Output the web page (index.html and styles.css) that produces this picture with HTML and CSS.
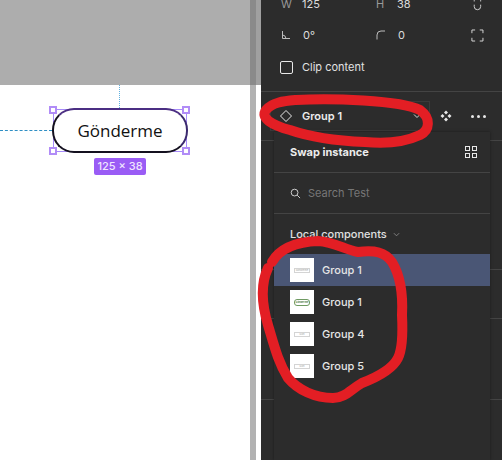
FILE: index.html
```html
<!DOCTYPE html>
<html lang="tr">
<head>
<meta charset="utf-8">
<title>Swap instance</title>
<link rel="stylesheet" href="styles.css">
</head>
<body>
<div class="app">
  <main class="canvas">
    <div class="canvas-top"></div>
    <div class="guide guide-v"></div>
    <div class="guide guide-h"></div>
    <div class="selection">
      <button class="pill">Gönderme</button>
      <i class="handle tl"></i><i class="handle tr"></i><i class="handle bl"></i><i class="handle br"></i>
    </div>
    <div class="size-tag">125 × 38</div>
  </main>
  <div class="gutter"><div class="gutter-top"></div></div>
  <aside class="panel">
    <section class="props">
      <div class="prop-row clipped">
        <span class="prop"><span class="prop-label">W</span><span>125</span></span>
        <span class="prop"><span class="prop-label">H</span><span>38</span></span>
        <svg class="ico" viewBox="0 0 14 14"><path d="M3.500 0V1.500M3.500 5V7a3.500 3.500 0 0 0 7 0V5M10.500 0V1.500" fill="none" stroke="#d8d8d8"/></svg>
      </div>
      <div class="prop-row">
        <span class="prop">
          <svg class="ico-s" viewBox="0 0 10 10"><path d="M1.500 1v7.500H9M1.500 5Q4.500 5 5 8.500" fill="none" stroke="#bdbdbd"/></svg>
          <span>0°</span>
        </span>
        <span class="prop">
          <svg class="ico-s" viewBox="0 0 10 10"><path d="M1 9.500V5Q1 1 5 1H9" fill="none" stroke="#bdbdbd"/></svg>
          <span>0</span>
        </span>
        <svg class="ico" viewBox="0 0 14 14"><path d="M1 4.500V1H4.500M9.500 1H13V4.500M13 9.500V13H9.500M4.500 13H1V9.500" fill="none" stroke="#e2e2e2"/></svg>
      </div>
      <label class="clip-row"><span class="checkbox"></span>Clip content</label>
    </section>
    <section class="instance">
      <div class="instance-select">
        <svg class="diamond" viewBox="0 0 14 14"><path d="M7 1.500 12.500 7 7 12.500 1.500 7Z" fill="none" stroke="#e8e8e8"/></svg>
        <span class="instance-name">Group 1</span>
        <svg class="chev" viewBox="0 0 8 8"><path d="M1 2.500 4 5.500 7 2.500" fill="none" stroke="#d5d5d5"/></svg>
      </div>
      <svg class="comp-ico" viewBox="0 0 12 12"><path fill="#e8e8e8" d="M6 .5 8 2.500 6 4.500 4 2.500ZM2.500 4 4.500 6 2.500 8 .5 6ZM9.500 4 11.500 6 9.500 8 7.500 6ZM6 7.500 8 9.500 6 11.500 4 9.500Z"/></svg>
      <span class="more"><i></i><i></i><i></i></span>
    </section>
    <div class="under-lines">
      <hr><hr><hr><hr>
    </div>
    <section class="popover">
      <header class="pop-head">
        <span>Swap instance</span>
        <span class="grid-ico"><i></i><i></i><i></i><i></i></span>
      </header>
      <div class="pop-search">
        <svg class="search-ico" viewBox="0 0 12 12"><circle cx="5" cy="5" r="3.700" fill="none" stroke="#d8d8d8"/><path d="M7.800 7.800 11 11" stroke="#d8d8d8"/></svg>
        <span>Search Test</span>
      </div>
      <div class="pop-section">
        <span>Local components</span>
        <svg class="chev-small" viewBox="0 0 8 8"><path d="M1 2.500 4 5.500 7 2.500" fill="none" stroke="#8a8a8a"/></svg>
      </div>
      <ul class="comp-list">
        <li class="comp active"><span class="thumb"><span class="mini">Gönderme</span></span>Group 1</li>
        <li class="comp"><span class="thumb"><span class="mini green">Gönderme</span></span>Group 1</li>
        <li class="comp"><span class="thumb"><span class="mini">Gön</span></span>Group 4</li>
        <li class="comp"><span class="thumb"><span class="mini">Gön</span></span>Group 5</li>
      </ul>
    </section>
  </aside>
  <svg class="scribbles" viewBox="0 0 502 460">
    <path d="M296 100C330 98 400 100 420 110C431 118 430 130 420 135C405 142 385 144 365 142C340 141 310 137 290 130C272 125 260 118 266 110C272 102 285 101 296 100Z"/>
    <path d="M272 262C280 248 295 242 318 241C335 242 345 250 358 252C375 250 385 252 392 262C400 275 403 295 402 315C403 335 402 350 398 358C392 370 375 378 362 383C350 390 345 398 333 398C315 398 298 390 288 378C278 362 274 345 268 325C262 305 260 285 268 268"/>
  </svg>
</div>
</body>
</html>
```
FILE: styles.css
```css
* { box-sizing: border-box; }
html, body { margin: 0; padding: 0; }
body { width: 502px; height: 460px; overflow: hidden; font-family: Inter, "Liberation Sans", sans-serif; }
.app { position: relative; display: flex; width: 502px; height: 460px; overflow: hidden; background: #2c2c2c; }

.canvas { position: relative; width: 250px; height: 460px; background: #fff; overflow: hidden; flex: none; }
.canvas-top { height: 85px; background: #adadad; }
.guide { position: absolute; }
.guide-v { left: 119px; top: 85px; height: 23px; border-left: 1px dotted #5fb0e0; }
.guide-h { left: 0; top: 130px; width: 52px; border-top: 1px dashed #2f8fc4; }
.selection { position: absolute; left: 52px; top: 108px; width: 136px; height: 45px; }
.selection::before { content: ""; position: absolute; inset: 1px; border: 1px solid #a78bfa; }
.pill { position: relative; display: block; width: 100%; height: 100%; margin: 0; padding: 0; background: #fff; color: #111; border: 2px solid #14101f; border-top-color: #4b2e83; border-right-color: #3b2a6e; border-radius: 22px; font: 400 17px "Open Sans", "Noto Sans", sans-serif; }
.handle { position: absolute; width: 8px; height: 8px; background: #fff; border: 2px solid #b18cf7; }
.handle.tl { left: -3px; top: -2px; }
.handle.tr { right: -2px; top: -2px; }
.handle.bl { left: -3px; bottom: -2px; }
.handle.br { right: -2px; bottom: -2px; }
.size-tag { position: absolute; left: 94px; top: 158px; width: 52px; height: 17px; border-radius: 2px; background: #9a5cf5; color: #f0e6ff; font: 500 11px/17px Inter, sans-serif; text-align: center; }

.gutter { width: 11px; flex: none; background: linear-gradient(90deg, #b2b2b2 0 6px, #fff 6px 100%); }
.gutter-top { height: 85px; background: linear-gradient(90deg, #8a8a8a 0 6px, #a0a0a0 6px 100%); }

.panel { position: relative; flex: 1; min-width: 0; background: #2c2c2c; color: #e6e6e6; font-size: 11px; }
.props { display: flow-root; height: 92px; padding: 0 18px 0 0; border-bottom: 1px solid #444; }
.prop-row { display: flex; align-items: center; height: 32px; padding-left: 20px; }
.prop-row.clipped { height: 19px; margin-top: -6px; margin-bottom: 6px; }
.prop-row.clipped .ico { align-self: flex-end; }
.prop-row .ico { margin-left: auto; }
.prop { display: flex; align-items: center; gap: 12px; width: 96px; color: #dcdcdc; }
.prop-label { width: 9px; color: #9a9a9a; }
.ico { width: 13px; height: 13px; }
.ico-s { width: 10px; height: 10px; }
.clip-row { display: flex; align-items: center; gap: 9px; height: 32px; padding-left: 19px; color: #e2e2e2; font-size: 11px; }
.checkbox { width: 13px; height: 13px; border: 1px solid #e8e8e8; border-radius: 2px; }

.instance { display: flex; align-items: center; height: 48px; padding: 0 11px 0 0; }
.instance-select { display: flex; align-items: center; width: 160px; height: 30px; margin-left: 9px; padding: 0 8px; border: 1px solid #3a3a3a; }
.diamond { width: 14px; height: 14px; margin-right: 9px; }
.instance-name { font-weight: 600; color: #ececec; }
.chev { width: 8px; height: 8px; margin-left: auto; }
.comp-ico { width: 12px; height: 12px; margin-left: 10px; }
.more { display: flex; gap: 3px; margin-left: 19px; }
.more i { width: 3px; height: 3px; border-radius: 50%; background: #e8e8e8; }

.under-lines { position: absolute; inset: 140px 0 0 0; }
.under-lines hr { height: 1px; margin: 0; border: 0; background: #444; }
.under-lines hr:nth-child(2) { margin-top: 128px; }
.under-lines hr:nth-child(3) { margin-top: 48px; }
.under-lines hr:nth-child(4) { margin-top: 80px; }

.popover { position: absolute; left: 13px; top: 132px; width: 216px; height: 328px; background: #2c2c2c; box-shadow: 0 0 3px rgba(0, 0, 0, .4); }
.pop-head { display: flex; align-items: center; justify-content: space-between; height: 41px; padding: 0 13px 0 16px; border-bottom: 1px solid #444; font-weight: 700; color: #ececec; }
.grid-ico { display: grid; grid-template-columns: 5px 5px; gap: 2px; }
.grid-ico i { height: 5px; border: 1px solid #e8e8e8; }
.pop-search { display: flex; align-items: center; gap: 7px; height: 41px; padding-left: 16px; border-bottom: 1px solid #444; color: #777; }
.search-ico { width: 11px; height: 11px; }
.pop-section { display: flex; align-items: center; gap: 6px; height: 40px; padding-left: 16px; color: #e0e0e0; font-weight: 500; }
.chev-small { width: 7px; height: 7px; }
.comp-list { list-style: none; margin: 0; padding: 0; }
.comp { display: flex; align-items: center; gap: 8px; height: 32px; padding-left: 16px; color: #e6e6e6; font-weight: 500; }
.comp.active { background: #4a5675; }
.thumb { display: flex; align-items: center; justify-content: center; width: 24px; height: 24px; background: #fff; flex: none; }
.mini { display: block; width: 16px; height: 5px; border: 1px solid #d4d4d4; color: #aaa; font-size: 2.500px; line-height: 3px; text-align: center; overflow: hidden; }
.mini.green { height: 7px; border-color: #6f9a62; border-radius: 3px; color: #4c7a3f; line-height: 5px; font-weight: 700; }

.scribbles { position: absolute; inset: 0; width: 502px; height: 460px; pointer-events: none; }
.scribbles path { fill: none; stroke: #e31e24; stroke-width: 10; stroke-linecap: round; stroke-linejoin: round; }
```
